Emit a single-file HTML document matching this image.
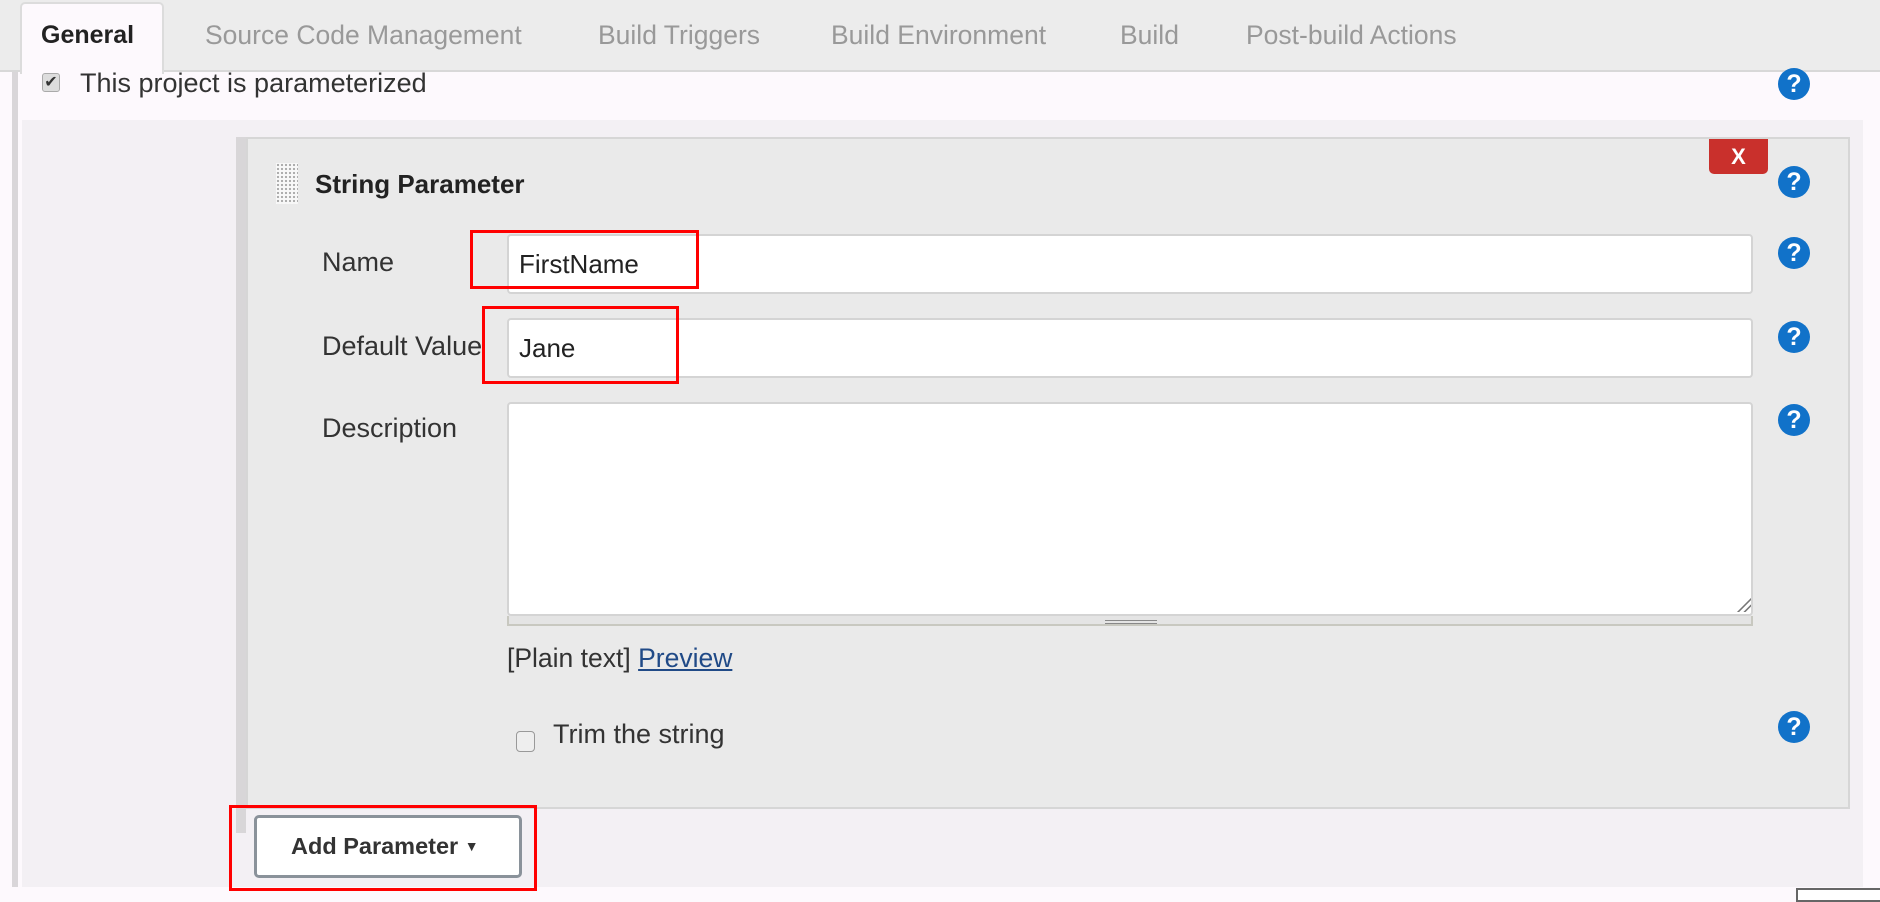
<!DOCTYPE html>
<html><head><meta charset="utf-8"><style>
*{margin:0;padding:0;box-sizing:border-box}
body{width:1880px;height:898px;overflow:hidden;background:#fdf9fd;font-family:"Liberation Sans",sans-serif;position:relative;color:#333}
.a{position:absolute}
.tab{position:absolute;top:20px;font-size:26.5px;color:#999;white-space:nowrap}
.help{position:absolute;width:32px;height:32px;border-radius:50%;background:#1172c9;color:#fff;font:bold 25px "Liberation Sans",sans-serif;text-align:center;line-height:32px;left:1778px}
.lbl{position:absolute;left:322px;font-size:27px;color:#333}
.inp{position:absolute;left:507px;width:1246px;background:#fff;border:2px solid #d4d4d4;border-radius:4px;font-size:26px;padding-left:10px;color:#222}
.red{position:absolute;border:3px solid #f00}
</style></head><body>
<div class="a" style="left:0;top:0;width:1880px;height:72px;background:#ececec;border-bottom:2px solid #d8d8d8"></div>
<div class="a" style="left:20px;top:2px;width:144px;height:72px;background:#fdf9fd;border:2px solid #dcdcdc;border-bottom:none;border-radius:5px 5px 0 0"></div>
<div class="tab" style="left:41px;color:#222;font-weight:bold;font-size:25px;top:21px">General</div>
<div class="tab" style="left:205px">Source Code Management</div>
<div class="tab" style="left:598px">Build Triggers</div>
<div class="tab" style="left:831px">Build Environment</div>
<div class="tab" style="left:1120px">Build</div>
<div class="tab" style="left:1246px">Post-build Actions</div>

<div class="a" style="left:12px;top:72px;width:6px;height:815px;background:#d9d6d9"></div>
<div class="a" style="left:42px;top:73px;width:18px;height:19px;border:1px solid #aaa;border-radius:3px;background:#ddd;font-size:16px;line-height:17px;text-align:center;color:#333">✔</div>
<div class="a" style="left:80px;top:68px;font-size:27px;color:#333">This project is parameterized</div>
<div class="help" style="top:68px">?</div>

<div class="a" style="left:22px;top:120px;width:1841px;height:767px;background:#f3f0f4"></div>
<div class="a" style="left:236px;top:137px;width:10px;height:696px;background:#d8d6d8"></div>
<div class="a" style="left:246px;top:137px;width:1604px;height:672px;background:#eaeaea;border:2px solid #d6d6d6"></div>
<div class="a" style="left:276px;top:163px;width:22px;height:41px;background-image:radial-gradient(#aaa 1px,transparent 1.3px);background-size:4px 4px;background-color:#f8f8f8"></div>
<div class="a" style="left:315px;top:169px;font-size:26px;font-weight:bold;color:#222">String Parameter</div>
<div class="a" style="left:1709px;top:139px;width:59px;height:35px;background:#c9302c;border-radius:0 0 5px 5px;color:#fff;font-weight:bold;font-size:22px;text-align:center;line-height:35px">X</div>
<div class="help" style="top:166px">?</div>

<div class="lbl" style="top:247px">Name</div>
<div class="inp" style="top:234px;height:60px;line-height:56px">FirstName</div>
<div class="help" style="top:237px">?</div>
<div class="lbl" style="top:331px">Default Value</div>
<div class="inp" style="top:318px;height:60px;line-height:56px">Jane</div>
<div class="help" style="top:321px">?</div>
<div class="lbl" style="top:413px">Description</div>
<div class="inp" style="top:402px;height:214px"></div>
<div class="a" style="left:1735px;top:596px;width:16px;height:16px;background:linear-gradient(135deg,transparent 55%,#777 57%,#777 62%,transparent 64%,transparent 75%,#777 77%,#777 82%,transparent 84%)"></div>
<div class="a" style="left:507px;top:616px;width:1246px;height:10px;background:#e4e4e4;border:2px solid #c8c8c0;border-top:none"></div>
<div class="a" style="left:1105px;top:620px;width:52px;height:4px;border-top:1px solid #888;border-bottom:1px solid #888"></div>
<div class="help" style="top:404px">?</div>
<div class="a" style="left:507px;top:643px;font-size:26.5px;color:#333">[Plain text] <span style="color:#204a87;text-decoration:underline">Preview</span></div>
<div class="a" style="left:516px;top:731px;width:19px;height:21px;border:1px solid #999;border-radius:4px;background:#eee"></div>
<div class="a" style="left:553px;top:719px;font-size:27px;color:#333">Trim the string</div>
<div class="help" style="top:711px">?</div>

<div class="a" style="left:254px;top:815px;width:268px;height:63px;background:#fff;border:3px solid #8a929a;border-radius:5px;font-size:23.5px;font-weight:bold;color:#333;line-height:57px;padding-left:34px;white-space:nowrap">Add Parameter <span style="font-size:14px;vertical-align:3px">▼</span></div>

<div class="red" style="left:470px;top:230px;width:229px;height:59px"></div>
<div class="red" style="left:482px;top:306px;width:197px;height:78px"></div>
<div class="red" style="left:229px;top:805px;width:308px;height:86px"></div>
<div class="a" style="left:1796px;top:888px;width:90px;height:14px;border:2px solid #666;background:#fff"></div>
</body></html>
